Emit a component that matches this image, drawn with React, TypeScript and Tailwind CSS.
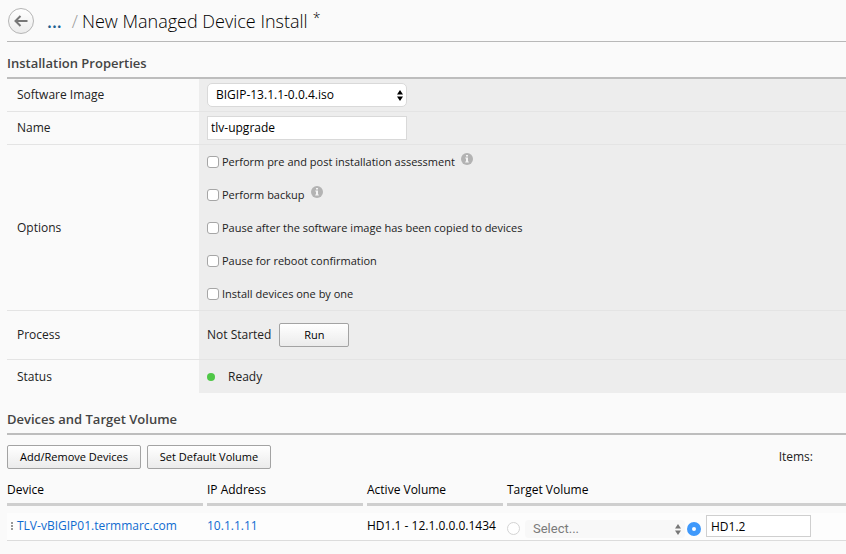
import type { ReactNode } from "react";

const buttonClass =
  "h-6 rounded-xs border border-[#a3a3a3] bg-linear-to-b from-white to-[#ebebeb] text-[11px] leading-4 text-black";

function SectionTitle({ children }: { children: ReactNode }) {
  return (
    <h2 className="border-b-2 border-[#bdbdbd] pb-1 text-[13px] leading-5 font-semibold text-[#444]">
      {children}
    </h2>
  );
}

function SortArrows({ className }: { className: string }) {
  return (
    <svg viewBox="0 0 6 11" className={className} aria-hidden="true">
      <path d="M3 0 L6 4.5 H0 Z M0 6.5 H6 L3 11 Z" fill="currentColor" />
    </svg>
  );
}

function InfoIcon() {
  return (
    <svg viewBox="0 0 12 12" className="mb-[6px] size-3" aria-hidden="true">
      <circle cx="6" cy="6" r="6" fill="#b3b3b3" />
      <path d="M5 2h2v1.6H5z M4.3 4.6H7v4h.8v1H4.2v-1H5v-3h-.7z" fill="#f4f4f4" />
    </svg>
  );
}

function PropertyRow({
  label,
  htmlFor,
  className,
  last = false,
  children,
}: {
  label: string;
  htmlFor?: string;
  className: string;
  last?: boolean;
  children: ReactNode;
}) {
  return (
    <div className={`flex ${last ? "" : "border-b border-[#e4e4e4]"} ${className}`}>
      <div className="flex w-48 shrink-0 items-center pl-[10px]">
        {htmlFor ? <label htmlFor={htmlFor}>{label}</label> : <span>{label}</span>}
      </div>
      <div className="flex grow items-center bg-[#ededed] pl-2">{children}</div>
    </div>
  );
}

const options = [
  { id: "assessment", label: "Perform pre and post installation assessment", info: true },
  { id: "backup", label: "Perform backup", info: true },
  { id: "pause-copy", label: "Pause after the software image has been copied to devices", info: false },
  { id: "pause-reboot", label: "Pause for reboot confirmation", info: false },
  { id: "one-by-one", label: "Install devices one by one", info: false },
];

function ColumnHead({ children, className, last = false }: { children: ReactNode; className: string; last?: boolean }) {
  return (
    <th scope="col" className={`p-0 pb-[7px] text-left font-normal ${className}`}>
      <div className={`border-b-3 border-[#cfcfcf] pb-[3px] leading-5 ${last ? "" : "mr-1"}`}>{children}</div>
    </th>
  );
}

export default function App() {
  return (
    <main className="min-h-screen bg-[#fafafa] pl-[7px] font-['Open_Sans','Noto_Sans',sans-serif] text-xs text-[#222]">
      <header className="flex h-[42px] items-center border-b border-[#b8b8b8]">
        <button
          type="button"
          aria-label="Back"
          className="ml-px flex size-[26px] items-center justify-center rounded-full border border-[#b5b5b5] bg-linear-to-b from-white to-[#ececec]"
        >
          <svg viewBox="0 0 14 12" className="h-3 w-[14px]" fill="none" stroke="#777" strokeWidth="2" aria-hidden="true">
            <path d="M1.5 6H13.5 M6.5 1L1.5 6L6.5 11" />
          </svg>
        </button>
        <nav className="flex items-center text-lg leading-6">
          <a href="#more" className="ml-[13px] font-semibold text-[#1d6191]">
            ...
          </a>
          <span className="ml-[10px] font-light text-[#999]">/</span>
          <h1 className="ml-1 font-light text-black">New Managed Device Install</h1>
          <span className="mb-[6px] ml-[5px] text-sm leading-4 font-light text-black">*</span>
        </nav>
      </header>

      <section className="pt-[11px]">
        <SectionTitle>Installation Properties</SectionTitle>
        <PropertyRow label="Software Image" htmlFor="image" className="h-[33px]">
          <div className="relative w-[200px]">
            <select
              id="image"
              className="h-6 w-full appearance-none rounded-[5px] border border-[#d9d9d9] bg-white pl-2 text-xs text-black"
            >
              <option>BIGIP-13.1.1-0.0.4.iso</option>
            </select>
            <SortArrows className="pointer-events-none absolute top-[7px] right-1 h-[11px] w-[6px] text-black" />
          </div>
        </PropertyRow>
        <PropertyRow label="Name" htmlFor="name" className="h-[33px]">
          <input
            id="name"
            type="text"
            defaultValue="tlv-upgrade"
            className="h-6 w-[200px] border border-[#d9d9d9] bg-white px-[3px] pb-px text-xs text-black"
          />
        </PropertyRow>
        <PropertyRow label="Options" className="h-[166px]">
          <div className="flex flex-col">
            {options.map((option) => (
              <div key={option.id} className="flex h-[33px] items-center">
                <input
                  id={option.id}
                  type="checkbox"
                  className="size-3 appearance-none rounded-[3px] border border-[#a6a6a6] bg-white"
                />
                <label htmlFor={option.id} className="mr-[6px] ml-[3px] text-[11px] leading-4">
                  {option.label}
                </label>
                {option.info && <InfoIcon />}
              </div>
            ))}
          </div>
        </PropertyRow>
        <PropertyRow label="Process" className="h-[49px]">
          <span className="mr-2">Not Started</span>
          <button type="button" className={`w-[70px] ${buttonClass}`}>
            Run
          </button>
        </PropertyRow>
        <PropertyRow label="Status" className="h-[33px]" last>
          <span className="mr-[13px] size-2 rounded-full bg-[#4fc747]" />
          <span>Ready</span>
        </PropertyRow>
      </section>

      <section className="pt-4">
        <SectionTitle>Devices and Target Volume</SectionTitle>
        <div className="flex items-center gap-[6px] pt-[10px] pb-[11px]">
          <button type="button" className={`w-[134px] ${buttonClass}`}>
            Add/Remove Devices
          </button>
          <button type="button" className={`w-[124px] ${buttonClass}`}>
            Set Default Volume
          </button>
          <span className="mr-[33px] ml-auto">Items:</span>
        </div>

        <table className="w-full table-fixed border-collapse text-black">
          <thead>
            <tr>
              <ColumnHead className="w-[200px]">Device</ColumnHead>
              <ColumnHead className="w-40">IP Address</ColumnHead>
              <ColumnHead className="w-[140px]">Active Volume</ColumnHead>
              <ColumnHead className="w-auto" last>
                Target Volume
              </ColumnHead>
            </tr>
          </thead>
          <tbody>
            <tr className="h-[27px] border-b border-[#dcdcdc] bg-[#fdfdfd]">
              <td className="p-0">
                <div className="flex items-center">
                  <svg viewBox="0 0 2 8" className="mr-1 ml-1 h-2 w-[2px]" fill="#999" aria-hidden="true">
                    <path d="M0 0h2v2H0z M0 3h2v2H0z M0 6h2v2H0z" />
                  </svg>
                  <a href="#device" className="text-[#0f6bd0]">
                    TLV-vBIGIP01.termmarc.com
                  </a>
                </div>
              </td>
              <td className="p-0">
                <a href="#address" className="text-[#0f6bd0]">
                  10.1.1.11
                </a>
              </td>
              <td className="p-0">HD1.1 - 12.1.0.0.0.1434</td>
              <td className="p-0">
                <div className="flex items-start">
                  <input
                    type="radio"
                    name="volume"
                    aria-label="Existing volume"
                    className="mt-2 size-[13px] appearance-none rounded-full border border-[#d4d4d4] bg-white checked:border-4 checked:border-[#3f99fb]"
                  />
                  <div className="relative mt-[6px] ml-[5px] w-40">
                    <select
                      disabled
                      aria-label="Target volume"
                      className="h-[18px] w-full appearance-none rounded-[4px] bg-[#f8f8f8] pl-2 font-[Roboto,'Liberation_Sans',sans-serif] text-[13px] leading-[18px] text-[#7a7a7a]"
                    >
                      <option>Select...</option>
                    </select>
                    <SortArrows className="pointer-events-none absolute top-1 right-1 h-[11px] w-[6px] text-[#777]" />
                  </div>
                  <input
                    type="radio"
                    name="volume"
                    defaultChecked
                    aria-label="New volume"
                    className="mt-2 ml-[2px] size-[14px] appearance-none rounded-full border border-[#d4d4d4] bg-white checked:border-5 checked:border-[#3f99fb]"
                  />
                  <input
                    type="text"
                    defaultValue="HD1.2"
                    aria-label="New volume name"
                    className="mt-px ml-[5px] h-[22px] w-[105px] border border-[#cfcfcf] bg-white px-1 text-xs text-black"
                  />
                </div>
              </td>
            </tr>
          </tbody>
        </table>
      </section>
    </main>
  );
}
